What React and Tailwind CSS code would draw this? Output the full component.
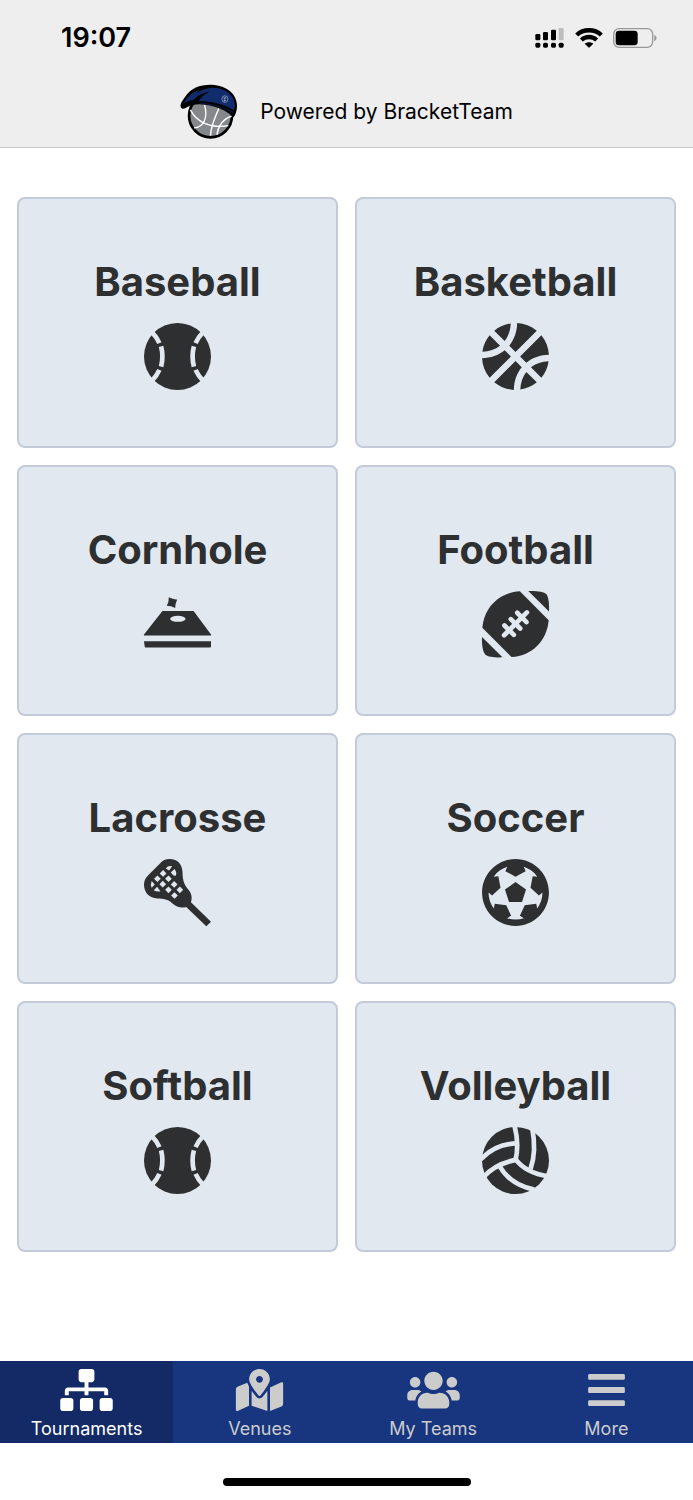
import React from 'react';
import {
  FaBars,
  FaBasketballBall,
  FaFutbol,
  FaMapMarkedAlt,
  FaSitemap,
  FaUsers,
} from 'react-icons/fa';

const BaseballIcon = ({ className }) => (
  <svg viewBox="-3 -3 206 206" className={className} aria-hidden="true">
    <circle cx="100" cy="100" r="100" fill="currentColor" />
    <g fill="none" stroke="#e2e8ef" strokeWidth="14">
      <path d="M24 28 Q38 42 46 60" />
      <path d="M51 70 Q59 100 51 130" />
      <path d="M46 140 Q38 158 24 172" />
      <path d="M176 28 Q162 42 154 60" />
      <path d="M149 70 Q141 100 149 130" />
      <path d="M154 140 Q162 158 176 172" />
    </g>
  </svg>
);

const CornholeIcon = ({ className }) => (
  <svg viewBox="-3 -3 206 206" fill="currentColor" className={className} aria-hidden="true">
    <path d="M74 19 Q87 26 99 25 Q93 38 93 51 Q81 44 68 44 Q75 32 74 19 Z" />
    <path d="M55 60 H148 L200 130 V133 H0 V130 Z" />
    <ellipse cx="101" cy="83" rx="23" ry="9" fill="#e2e8ef" />
    <path d="M0 150 H200 V166 Q200 169 197 169 H5 Q2 169 2 166 Z" />
  </svg>
);

const FootballIcon = ({ className }) => (
  <svg viewBox="-3 -3 206 206" fill="currentColor" className={className} aria-hidden="true">
    <path d="M113 1 L199 87 C194 148 150 193 88 197 L1 110 C6 50 50 5 113 1 Z" />
    <path d="M138 0 C165 -1 185 3 192 9 C199 18 201 40 200 61 Z" />
    <path d="M0 137 L61 198 C38 199 18 196 10 190 C2 180 -1 160 0 137 Z" />
    <g stroke="#e2e8ef" strokeWidth="14" strokeLinecap="round">
      <path d="M66 132 L134 64" />
      <path d="M67 103 L95 131" />
      <path d="M86 84 L114 112" />
      <path d="M105 65 L133 93" />
    </g>
  </svg>
);

const LacrosseIcon = ({ className }) => (
  <svg viewBox="-3 -3 206 206" className={className} aria-hidden="true">
    <path
      fill="currentColor"
      d="M77 0 C100 0 114 15 115 40 C115 66 122 80 134 93 C143 104 144 118 140 129 L200 187 L186 201 L126 143 C113 148 96 143 84 132 C72 120 58 119 40 118 C16 117 0 100 0 77 C0 64 5 56 14 47 L47 14 C56 4 64 0 77 0 Z"
    />
    <g fill="#e2e8ef">
      <path d="M65 28 Q72 19 84 22 L75 34 Z" />
      <path d="M57 33 L67 43 L57 53 L47 43 Z" />
      <path d="M80 40 L91 30 Q99 40 95 50 L88 49 Z" />
      <path d="M40 49 L50 59 L40 69 L30 59 Z" />
      <path d="M73 49 L83 59 L73 69 L63 59 Z" />
      <path d="M23 66 L32 76 L23 86 Q18 77 23 66 Z" />
      <path d="M56 65 L66 75 L56 85 L46 75 Z" />
      <path d="M90 66 L100 76 L90 86 L80 76 Z" />
      <path d="M39 83 L49 96 Q39 99 29 93 Z" />
      <path d="M73 82 L83 92 L73 102 L63 92 Z" />
      <path d="M107 82 L117 92 L107 102 L97 92 Z" />
      <path d="M91 99 L101 109 L91 119 L81 109 Z" />
    </g>
  </svg>
);

const VolleyballIcon = ({ className }) => (
  <svg viewBox="-3 -3 206 206" className={className} aria-hidden="true">
    <circle cx="100" cy="100" r="100" fill="currentColor" />
    <g fill="none" stroke="#e2e8ef" strokeWidth="14">
      <path d="M97 -4 C106 30 107 70 100 99" />
      <path d="M150 4 C159 50 157 90 145 125" />
      <path d="M-4 97 C25 66 65 50 104 49" />
      <path d="M4 150 C30 120 65 105 101 98" />
      <path d="M100 96 C122 126 155 141 198 147" />
      <path d="M54 119 C75 155 110 178 156 187" />
    </g>
  </svg>
);

const BrandLogo = ({ className }) => (
  <svg viewBox="36 27 173 165" className={className} aria-hidden="true">
    <circle cx="127" cy="121" r="64" fill="#85888a" stroke="#000" strokeWidth="8" />
    <g fill="none" stroke="#fff" strokeWidth="4">
      <path d="M67 103 C85 138 125 160 180 150" />
      <path d="M109 88 C120 125 108 155 78 157" />
      <path d="M152 98 C140 128 128 150 127 180" />
      <path d="M190 122 C165 130 150 150 146 178" />
    </g>
    <path
      d="M39 97 C34 86 43 75 52 63 C68 38 98 27 130 28 C178 30 207 58 206 92 C206 104 202 116 196 125 C172 104 146 93 112 88 C88 84 68 88 54 97 C48 101 42 101 39 97 Z"
      fill="#000"
    />
    <path
      d="M47 84 C56 66 72 50 94 44 L86 52 C102 42 116 38 132 37 C170 37 196 58 199 84 C200 92 200 98 197 104 C172 89 134 77 92 77 C98 66 108 56 124 48 C104 52 86 61 76 74 C64 75 55 78 47 84 Z"
      fill="#102c6c"
    />
    <path d="M95 83 C132 86 168 96 196 112" fill="none" stroke="#102c6c" strokeWidth="2" />
    <g fill="none" stroke="#a3aec8" strokeWidth="2">
      <ellipse cx="170" cy="71" rx="9" ry="10" />
      <path d="M171 64 L168 79 M165 68 H175 M166 75 H174" />
    </g>
  </svg>
);

const SignalIcon = ({ className }) => (
  <svg viewBox="0 0 88 60" className={className} aria-hidden="true">
    <rect x="0" y="18" width="15" height="19" rx="4" />
    <rect x="23" y="12" width="15" height="25" rx="4" />
    <rect x="47" y="5" width="15" height="32" rx="4" />
    <rect x="70" y="0" width="15" height="37" rx="4" fill="#bdbdbd" />
    <rect x="0" y="44" width="15" height="15" rx="5" />
    <rect x="23" y="44" width="15" height="15" rx="5" />
    <rect x="47" y="44" width="15" height="15" rx="5" />
    <rect x="70" y="44" width="15" height="15" rx="5" />
  </svg>
);

const WifiIcon = ({ className }) => (
  <svg viewBox="0 0 82 60" className={className} aria-hidden="true">
    <g fill="none" stroke="#000" strokeWidth="13">
      <path d="M4 21 C24 2 58 2 78 21" />
      <path d="M18 36 C31 24 51 24 64 36" />
    </g>
    <path d="M28 47 C35 41 47 41 54 47 L43 58 Q41 60 39 58 Z" />
  </svg>
);

const BatteryIcon = ({ className }) => (
  <svg viewBox="0 0 132 60" className={className} aria-hidden="true">
    <rect x="2" y="2" width="117" height="56" rx="16" fill="none" stroke="#999" strokeWidth="4" />
    <rect x="8" y="8" width="66" height="44" rx="10" />
    <path d="M124 20 Q131 24 131 30 Q131 36 124 40 Z" fill="#999" />
  </svg>
);

const sports = [
  { name: 'Baseball', icon: BaseballIcon },
  { name: 'Basketball', icon: FaBasketballBall },
  { name: 'Cornhole', icon: CornholeIcon },
  { name: 'Football', icon: FootballIcon },
  { name: 'Lacrosse', icon: LacrosseIcon },
  { name: 'Soccer', icon: FaFutbol },
  { name: 'Softball', icon: BaseballIcon },
  { name: 'Volleyball', icon: VolleyballIcon },
];

const tabs = [
  { label: 'Tournaments', icon: FaSitemap, active: true },
  { label: 'Venues', icon: FaMapMarkedAlt },
  { label: 'My Teams', icon: FaUsers },
  { label: 'More', icon: FaBars },
];

const App = () => (
  <div className="flex min-h-screen flex-col bg-white font-['Inter',sans-serif] text-black">
    <header className="border-b border-[#c8c8c8] bg-[#eeeeee]">
      <div className="flex h-19 items-center justify-between pr-9 pl-[61px]">
        <time className="text-[27px] font-semibold">19:07</time>
        <div className="flex items-center gap-2.5">
          <SignalIcon className="h-5 w-[30px]" />
          <WifiIcon className="h-5 w-7" />
          <BatteryIcon className="h-5 w-11" />
        </div>
      </div>
      <div className="flex h-[71px] items-center justify-center gap-[22px]">
        <BrandLogo className="h-14 w-[58px]" />
        <p className="text-[21px]">Powered by BracketTeam</p>
      </div>
    </header>

    <main className="grid grow grid-cols-2 content-start gap-[17px] px-[17px] pt-[49px]">
      {sports.map(({ name, icon: Icon }) => (
        <button
          key={name}
          type="button"
          className="flex h-[251px] flex-col items-center justify-center gap-4 rounded-lg border-2 border-[#c3cbd8] bg-[#e2e8ef] pt-1 text-[#2d2f30]"
        >
          <span className="text-[40px] leading-12 font-bold">{name}</span>
          <Icon className="size-[69px]" />
        </button>
      ))}
    </main>

    <nav className="grid grid-cols-4 bg-[#17367f]">
      {tabs.map(({ label, icon: Icon, active }) => (
        <a
          key={label}
          href="#"
          className={`flex h-[82px] flex-col items-center gap-1.5 pt-2 text-[18px] leading-6 ${
            active ? 'bg-[#132a66] text-white' : 'text-[#cccccc]'
          }`}
        >
          <Icon className="h-[42px] w-[53px]" />
          {label}
        </a>
      ))}
    </nav>

    <div className="flex h-[57px] justify-center pt-[35px]">
      <div className="h-2 w-[248px] rounded-full bg-black" />
    </div>
  </div>
);

export default App;
